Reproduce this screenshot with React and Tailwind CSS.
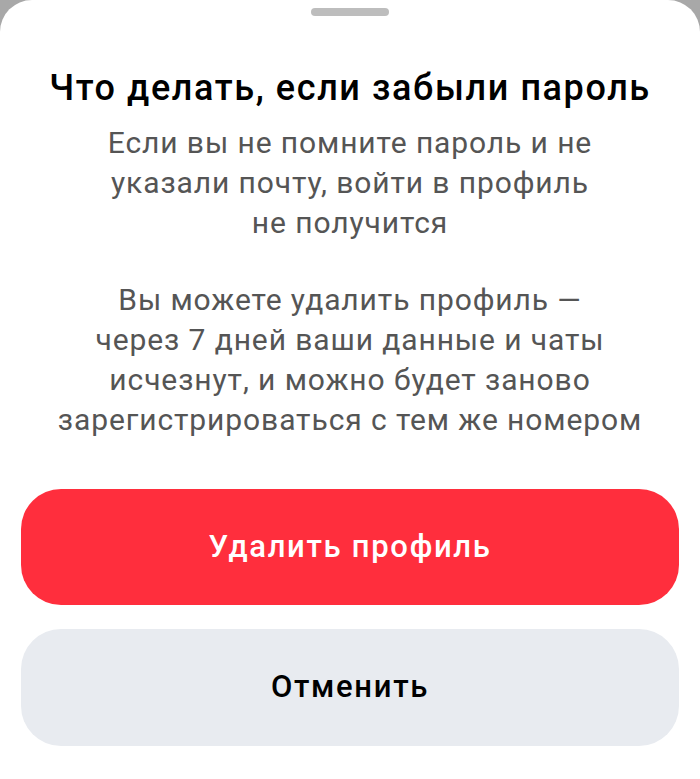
export default function App() {
  return (
    <div className="min-h-[779px] w-full bg-[#a8a8a8]" style={{ fontFamily: 'Roboto, "Noto Sans", sans-serif' }}>
      <div className="flex min-h-[779px] flex-col items-center rounded-t-[32px] bg-white px-[21px]">
        <div className="mt-2 h-2 w-[78px] rounded-full bg-[#bdbdbd]" />
        <h1 className="mt-[52px] whitespace-nowrap text-center text-[36px] font-medium leading-[40px] tracking-[1.6px] text-black">
          Что делать, если забыли пароль
        </h1>
        <div className="mt-[15px] whitespace-nowrap text-center text-[30px] leading-[40px] tracking-[0.9px] text-[#555555]">
          <p>
            Если вы не помните пароль и не
            <br />
            указали почту, войти в профиль
            <br />
            не получится
          </p>
          <p className="mt-[37px]">
            Вы можете удалить профиль —
            <br />
            через 7 дней ваши данные и чаты
            <br />
            исчезнут, и можно будет заново
            <br />
            зарегистрироваться с тем же номером
          </p>
        </div>
        <button
          type="button"
          className="mt-[49px] flex h-[116px] w-full items-center justify-center rounded-[40px] bg-[#ff2e3d] text-[31px] font-medium tracking-[1.7px] text-white"
        >
          Удалить профиль
        </button>
        <button
          type="button"
          className="mt-6 flex h-[117px] w-full items-center justify-center rounded-[40px] bg-[#e8ebf0] text-[31px] font-medium tracking-[1.7px] text-black"
        >
          Отменить
        </button>
      </div>
    </div>
  );
}
